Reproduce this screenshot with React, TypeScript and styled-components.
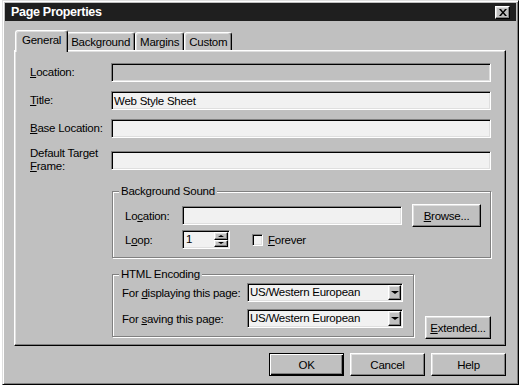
import { Fragment } from "react";
import styled, { createGlobalStyle, css } from "styled-components";

const GlobalStyle = createGlobalStyle`
  body {
    margin: 0;
    background: #ffffff;
    font-family: "Liberation Sans", Arial, sans-serif;
    font-size: 11.5px;
    letter-spacing: -0.25px;
    color: #000000;
  }
`;

const raised = css`
  border: 1px solid;
  border-color: #ffffff #000000 #000000 #ffffff;
  box-shadow: inset -1px -1px #808080, inset 1px 1px #dfdfdf;
`;

const sunken = css`
  border: 1px solid;
  border-color: #808080 #ffffff #ffffff #808080;
  box-shadow: inset 1px 1px #000000, inset -1px -1px #dfdfdf;
`;

const Window = styled.div`
  box-sizing: border-box;
  width: 517px;
  height: 385px;
  margin-left: 2px;
  padding: 2px;
  display: flex;
  flex-direction: column;
  background: #c0c0c0;
  border: 1px solid;
  border-color: #dfdfdf #000000 #000000 #dfdfdf;
  box-shadow: inset 1px 1px #ffffff, inset -1px -1px #808080;
`;

const TitleBar = styled.div`
  height: 18px;
  display: flex;
  align-items: center;
  justify-content: space-between;
  padding: 0 6px 0 6px;
  background: #1f1f1f;
`;

const TitleText = styled.span`
  color: #ffffff;
  font-weight: bold;
  font-size: 12.5px;
  letter-spacing: -0.3px;
`;

const CloseButton = styled.div`
  box-sizing: border-box;
  width: 15px;
  height: 13px;
  display: flex;
  align-items: center;
  justify-content: center;
  background: #c0c0c0;
  ${raised};
`;

const Body = styled.div`
  flex: 1;
  display: flex;
  flex-direction: column;
  padding: 9px 10px 0 9px;
`;

const TabStrip = styled.div`
  height: 20px;
  display: flex;
  align-items: flex-end;
  padding-left: 3px;
`;

const Tab = styled.div<{ $active?: boolean }>`
  box-sizing: border-box;
  height: 18px;
  padding: 0 4px;
  display: flex;
  align-items: center;
  background: #c0c0c0;
  border-top: 1px solid #ffffff;
  border-left: 1px solid #ffffff;
  border-right: 1px solid #000000;
  border-radius: 3px 3px 0 0;
  box-shadow: inset -1px 0 #808080, inset 1px 1px #dfdfdf;
  ${(p) =>
    p.$active &&
    css`
      position: relative;
      z-index: 1;
      height: 22px;
      margin: 0 -2px -2px;
      padding: 0 6px 3px;
    `}
`;

const Panel = styled.div`
  box-sizing: border-box;
  height: 296px;
  padding: 12px 14px 0 15px;
  background: #c0c0c0;
  border: 1px solid;
  border-color: #ffffff #000000 #000000 #ffffff;
  box-shadow: inset -1px -1px #808080, inset 1px 1px #dfdfdf;
`;

const FieldGrid = styled.div`
  display: grid;
  grid-template-columns: 81px 1fr;
  row-gap: 9px;
  align-items: center;
`;

const FieldLabel = styled.div<{ $multiline?: boolean }>`
  line-height: 13px;
  ${(p) =>
    p.$multiline &&
    css`
      align-self: start;
    `}
`;

const TextBox = styled.div<{ $disabled?: boolean; $grow?: boolean }>`
  box-sizing: border-box;
  height: 19px;
  padding: 0 2px;
  display: flex;
  align-items: center;
  white-space: nowrap;
  background: ${(p) => (p.$disabled ? "#c0c0c0" : "#f1f1f1")};
  ${sunken};
  ${(p) =>
    p.$grow &&
    css`
      flex: 1;
    `}
`;

const Groups = styled.div`
  margin-top: 18px;
  padding-left: 82px;
`;

const GroupBox = styled.div<{ $width?: number }>`
  position: relative;
  box-sizing: border-box;
  width: ${(p) => (p.$width ? `${p.$width}px` : "auto")};
  border: 1px solid #808080;
  box-shadow: inset 1px 1px #ffffff, 1px 1px #ffffff;
`;

const Legend = styled.span`
  position: absolute;
  top: -7px;
  left: 6px;
  padding: 0 2px;
  line-height: 13px;
  background: #c0c0c0;
`;

const SoundBody = styled.div`
  display: flex;
  flex-direction: column;
  gap: 3px;
  padding: 12px 9px 8px 12px;
`;

const GroupRow = styled.div`
  display: flex;
  align-items: center;
  gap: 10px;
`;

const RowLabel = styled.span<{ $width: number }>`
  width: ${(p) => p.$width}px;
`;

const Button = styled.div<{ $default?: boolean }>`
  box-sizing: border-box;
  width: 69px;
  height: 23px;
  display: flex;
  align-items: center;
  justify-content: center;
  background: #c0c0c0;
  ${raised};
  ${(p) =>
    p.$default &&
    css`
      border-color: #000000;
      box-shadow: inset 1px 1px #ffffff, inset -1px -1px #000000,
        inset -2px -2px #808080;
    `}
`;

const Spinner = styled.div`
  box-sizing: border-box;
  width: 48px;
  height: 19px;
  padding: 1px;
  display: flex;
  background: #f1f1f1;
  ${sunken};
`;

const SpinText = styled.span`
  flex: 1;
  padding-left: 2px;
  line-height: 15px;
`;

const SpinColumn = styled.div`
  width: 14px;
  display: flex;
  flex-direction: column;
`;

const SpinButton = styled.div`
  flex: 1;
  display: flex;
  align-items: center;
  justify-content: center;
  background: #c0c0c0;
  ${raised};
`;

const Arrow = styled.span<{ $up?: boolean; $size: number }>`
  width: 0;
  height: 0;
  border-left: ${(p) => p.$size}px solid transparent;
  border-right: ${(p) => p.$size}px solid transparent;
  ${(p) =>
    p.$up
      ? css`
          border-bottom: ${p.$size - 1}px solid #000000;
        `
      : css`
          border-top: ${p.$size - 1}px solid #000000;
        `}
`;

const CheckWrap = styled.div`
  display: flex;
  align-items: center;
  gap: 5px;
  margin-left: 12px;
`;

const CheckBox = styled.span`
  box-sizing: border-box;
  width: 11px;
  height: 12px;
  background: #f1f1f1;
  ${sunken};
`;

const EncodingRow = styled.div`
  display: flex;
  align-items: flex-end;
  margin-top: 16px;
`;

const EncodingBody = styled.div`
  display: grid;
  grid-template-columns: 125px 156px;
  row-gap: 7px;
  align-items: center;
  padding: 8px 10px 8px 9px;
`;

const Select = styled.div`
  box-sizing: border-box;
  height: 19px;
  padding: 1px;
  display: flex;
  background: #f1f1f1;
  ${sunken};
`;

const SelectText = styled.span`
  flex: 1;
  padding-left: 1px;
  line-height: 15px;
  white-space: nowrap;
`;

const DropButton = styled.div`
  box-sizing: border-box;
  width: 13px;
  display: flex;
  align-items: center;
  justify-content: center;
  background: #c0c0c0;
  ${raised};
`;

const SideButton = styled(Button)`
  margin: 0 0 -2px 11px;
`;

const ButtonBar = styled.div`
  display: flex;
  justify-content: flex-end;
  gap: 6px;
  margin-top: 7px;
`;

const DialogButton = styled(Button)`
  width: 75px;
`;

const encodings = [
  { label: "For ", key: "d", rest: "isplaying this page:" },
  { label: "For ", key: "s", rest: "aving this page:" },
];

export default function App() {
  return (
    <>
      <GlobalStyle />
      <Window>
        <TitleBar>
          <TitleText>Page Properties</TitleText>
          <CloseButton>
            <svg width="8" height="7" viewBox="0 0 8 7">
              <path
                d="M0 0h2l2 2.4L6 0h2L5 3.5 8 7H6L4 4.6 2 7H0l3-3.5z"
                fill="#000"
              />
            </svg>
          </CloseButton>
        </TitleBar>
        <Body>
          <TabStrip>
            <Tab $active>General</Tab>
            <Tab>Background</Tab>
            <Tab>Margins</Tab>
            <Tab>Custom</Tab>
          </TabStrip>
          <Panel>
            <FieldGrid>
              <FieldLabel>
                <u>L</u>ocation:
              </FieldLabel>
              <TextBox $disabled />
              <FieldLabel>
                <u>T</u>itle:
              </FieldLabel>
              <TextBox>Web Style Sheet</TextBox>
              <FieldLabel>
                <u>B</u>ase Location:
              </FieldLabel>
              <TextBox />
              <FieldLabel $multiline>
                Default Target
                <br />
                <u>F</u>rame:
              </FieldLabel>
              <TextBox />
            </FieldGrid>
            <Groups>
              <GroupBox>
                <Legend>Background Sound</Legend>
                <SoundBody>
                  <GroupRow>
                    <RowLabel $width={47}>
                      Lo<u>c</u>ation:
                    </RowLabel>
                    <TextBox $grow />
                    <Button>
                      <span>
                        <u>B</u>rowse...
                      </span>
                    </Button>
                  </GroupRow>
                  <GroupRow>
                    <RowLabel $width={47}>
                      L<u>o</u>op:
                    </RowLabel>
                    <Spinner>
                      <SpinText>1</SpinText>
                      <SpinColumn>
                        <SpinButton>
                          <Arrow $up $size={3} />
                        </SpinButton>
                        <SpinButton>
                          <Arrow $size={3} />
                        </SpinButton>
                      </SpinColumn>
                    </Spinner>
                    <CheckWrap>
                      <CheckBox />
                      <span>
                        <u>F</u>orever
                      </span>
                    </CheckWrap>
                  </GroupRow>
                </SoundBody>
              </GroupBox>
              <EncodingRow>
                <GroupBox $width={302}>
                  <Legend>HTML Encoding</Legend>
                  <EncodingBody>
                    {encodings.map((e) => (
                      <Fragment key={e.key}>
                        <span>
                          {e.label}
                          <u>{e.key}</u>
                          {e.rest}
                        </span>
                        <Select>
                          <SelectText>US/Western European</SelectText>
                          <DropButton>
                            <Arrow $size={4} />
                          </DropButton>
                        </Select>
                      </Fragment>
                    ))}
                  </EncodingBody>
                </GroupBox>
                <SideButton>
                  <span>
                    <u>E</u>xtended...
                  </span>
                </SideButton>
              </EncodingRow>
            </Groups>
          </Panel>
          <ButtonBar>
            <DialogButton $default>OK</DialogButton>
            <DialogButton>Cancel</DialogButton>
            <DialogButton>Help</DialogButton>
          </ButtonBar>
        </Body>
      </Window>
    </>
  );
}
